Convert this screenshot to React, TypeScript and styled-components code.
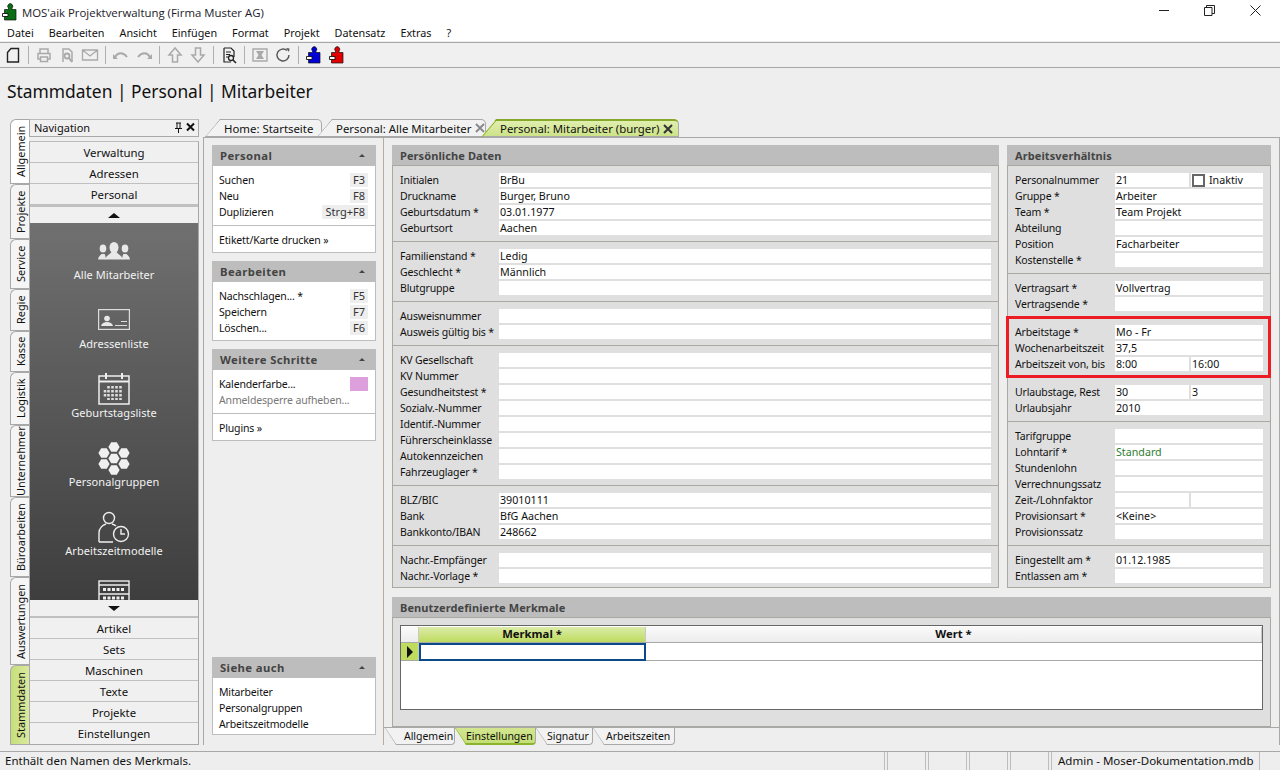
import React from 'react';
import styled, { createGlobalStyle } from 'styled-components';

const Global = createGlobalStyle`
  html, body { margin: 0; padding: 0; width: 1280px; height: 770px; overflow: hidden; background: #eeeeee; }
  * { box-sizing: border-box; }
  #root { width: 1280px; height: 770px; }
`;

const Window = styled.div`
  width: 1280px; height: 770px; display: flex; flex-direction: column; overflow: hidden;
  font-family: "Noto Sans", "Liberation Sans", sans-serif; font-size: 10.5px; letter-spacing: -0.15px; color: #111; background: #eeeeee;
`;
const TitleBar = styled.div`
  height: 24px; background: #fff; display: flex; align-items: center; padding: 0 2px 0 1px; flex: none;
`;
const TitleText = styled.span`
  font-size: 11.4px; letter-spacing: 0; margin-left: 3px; color: #1a1a2a; flex: 1; font-family: "Open Sans", sans-serif;
`;
const WinBtn = styled.div`
  width: 45.5px; height: 20px; display: flex; align-items: center; justify-content: center; margin-top: -4px;
`;
const MenuBar = styled.div`
  height: 17px; background: #fff; display: flex; gap: 15px; padding-left: 7px; align-items: center; flex: none; font-size: 10.8px; letter-spacing: 0;
`;
const Toolbar = styled.div`
  height: 26px; margin-top: 1px; background: #f0f0f0; border-top: 1px solid #a8a8a8; border-bottom: 1px solid #a8a8a8;
  display: flex; align-items: center; padding-left: 3px; gap: 3px; flex: none;
`;
const ToolIcon = styled.div`
  width: 20px; height: 20px; display: flex; align-items: center; justify-content: center;
`;
const ToolSep = styled.div`
  width: 1px; height: 18px; background: #b0b0b0; margin: 0 2px;
`;
const PageTitle = styled.div`
  height: 51px; flex: none; padding: 9px 0 0 7px; font-size: 17.4px; letter-spacing: 0; line-height: 28px; color: #111;
`;
const Main = styled.div`
  flex: 1; min-height: 0; display: flex; padding-left: 10px;
`;
const Rail = styled.div`
  width: 19px; display: flex; flex-direction: column; flex: none; height: 626px;
`;
const RailTab = styled.div<{ $h: number; $green?: boolean; $active?: boolean }>`
  height: ${p => p.$h}px; writing-mode: vertical-rl; transform: rotate(180deg);
  display: flex; align-items: center; justify-content: center; font-size: 10.9px; letter-spacing: 0;
  background: ${p => p.$green ? 'linear-gradient(90deg,#dbe9a0,#c5df78)' : p.$active ? '#fff' : '#f5f5f5'};
  border: 1px solid #a8a8a8; border-left: none; border-radius: 0 0 6px 0; color: #111; white-space: nowrap;
`;
const Nav = styled.div`
  width: 170px; flex: none; display: flex; flex-direction: column; height: 626px;
`;
const NavHead = styled.div`
  height: 18px; background: #f0f0f0; border: 1px solid #a8a8a8; border-top-color: #bbb; padding: 0 0 1px 4px;
  display: flex; align-items: center; margin-bottom: 4px; flex: none; font-size: 11px; letter-spacing: 0;
`;
const NavHeadText = styled.span`
  flex: 1;
`;
const NavStack = styled.div`
  flex: 1; min-height: 0; display: flex; flex-direction: column; border: 1px solid #a8a8a8; border-top-color: #bbb;
`;
const NavBtn = styled.div`
  height: 21px; flex: none; display: flex; align-items: center; justify-content: center; font-size: 11.4px; letter-spacing: 0;
  background: #f0f0f0; border-bottom: 1px solid #c0c0c0; color: #111;
  &:last-child { border-bottom: none; }
`;
const ArrowBtn = styled.div<{ $down?: boolean }>`
  height: 18px; flex: none; display: flex; align-items: center; justify-content: center; background: #f0f0f0;
  border-top: ${p => p.$down ? 'none' : '2px solid #c0c0c0'};
  border-bottom: ${p => p.$down ? '2px solid #c0c0c0' : 'none'};
  &::after {
    content: ''; width: 0; height: 0; border-left: 6px solid transparent; border-right: 6px solid transparent;
    ${p => p.$down ? 'border-top: 5px solid #111;' : 'border-bottom: 5px solid #111;'}
  }
`;
const Dark = styled.div`
  flex: 1; min-height: 0; overflow: hidden; background: linear-gradient(#707070, #3e3e3e);
  display: flex; flex-direction: column; align-items: center;
`;
const DarkItem = styled.div`
  height: 69px; flex: none; width: 100%; display: flex; flex-direction: column; align-items: center;
  color: #f2f2f2; padding-top: 12px; font-size: 11px; letter-spacing: 0.05px;
`;
const DarkIcon = styled.div<{ $inset?: number }>`
  height: 31px; display: flex; align-items: flex-start; justify-content: center; margin-bottom: 1px; padding-top: ${p => p.$inset || 0}px;
`;
const Right = styled.div`
  flex: 1; min-width: 0; margin-left: 4px; display: flex; flex-direction: column; height: 626px;
`;
const TabStrip = styled.div`
  height: 18px; flex: none; display: flex; padding-left: 2px; align-items: flex-end;
`;
const DocTab = styled.div<{ $w: number; $active?: boolean }>`
  width: ${p => p.$w}px; height: 18px; position: relative; display: flex; align-items: center; padding-left: 19px; gap: 4px; flex: none;
  background: ${p => p.$active ? 'linear-gradient(#e0eeb0,#cde388)' : '#f2f2f2'};
  border-top: ${p => p.$active ? '2px solid #86a92a' : '1px solid #a8a8a8'}; border-right: 1px solid #a8a8a8; border-bottom: 1px solid #a8a8a8;
  border-radius: 0 5px 0 0; white-space: nowrap; font-size: 11.4px; letter-spacing: 0;
  clip-path: polygon(15px 0, 100% 0, 100% 100%, 0 100%);
  & + & { margin-left: -5px; }
`;
const TabSlant = styled.svg`
  position: absolute; left: 0; top: -1px; width: 17px; height: 18px; pointer-events: none;
`;
const CloseIcon = styled.svg`
  flex: none; width: 10px; height: 10px;
`;
const Frame = styled.div`
  flex: 1; min-height: 0; border-left: 1px solid #a8a8a8; border-right: 1px solid #a8a8a8; border-top: 1px solid #a8a8a8; display: flex;
`;
const Side = styled.div`
  width: 180px; flex: none; padding: 7px 8px 10px 8px; border-right: 1px solid #b5ae9c;
  display: flex; flex-direction: column; gap: 8px;
`;
const SideSpacer = styled.div`
  flex: 1; margin: -8px 0;
`;
const Card = styled.div`
  width: 164px; border: 1px solid #bdbdbd; background: #fff; flex: none;
`;
const CardHead = styled.div`
  height: 21px; margin: -1px -1px 0; background: #bdbdbd; padding: 0 8px; display: flex; align-items: center; justify-content: space-between;
  font-weight: 700; color: #444; font-size: 11.3px; letter-spacing: 0.4px;
`;
const Caret = styled.span`
  width: 0; height: 0; border-left: 3px solid transparent; border-right: 3px solid transparent; border-bottom: 3px solid #444; margin-right: 3px;
`;
const CardSection = styled.div<{ $tight?: boolean }>`
  padding: 6px 7px ${p => p.$tight ? 2 : 4}px 6px;
  &:not(:last-child) { padding-bottom: 5px; border-bottom: 1px solid #bdbdbd; }
`;
const CardRow = styled.div<{ $muted?: boolean }>`
  height: 16px; display: flex; align-items: center; justify-content: space-between; white-space: nowrap; color: ${p => p.$muted ? '#777' : '#111'};
`;
const Key = styled.span`
  background: #eeeeee; height: 14px; line-height: 14px; padding: 0 3px; color: #333; min-width: 18px; text-align: center; font-size: 11px; letter-spacing: 0;
`;
const Swatch = styled.span`
  width: 18px; height: 14px; background: #dda0dd;
`;
const WorkColumn = styled.div`
  flex: 1; min-width: 0; display: flex; flex-direction: column;
`;
const Work = styled.div`
  flex: 1; min-height: 0; border-bottom: 1px solid #a8a8a8; padding: 7px 8px 0 8px; display: flex; flex-direction: column; gap: 9px;
`;
const PanelRow = styled.div`
  display: flex; gap: 8px; flex: none;
`;
const Panel = styled.div<{ $w?: number }>`
  ${p => p.$w ? `width: ${p.$w}px; flex: none;` : 'flex: 1;'} background: #dfdfdf; border: 1px solid #aaa89f;
`;
const PanelHead = styled.div`
  height: 21px; background: #bdbdbd; padding-left: 8px; display: flex; align-items: center; font-weight: 700; color: #444; font-size: 11px; letter-spacing: 0.1px;
  border-bottom: 1px solid #aaa89f; margin: -1px -1px 0 -1px;
`;
const Group = styled.div<{ $label: number; $last?: boolean }>`
  padding: 6px 7px ${p => p.$last ? 3 : 5}px 7px; display: grid; grid-template-columns: ${p => p.$label}px 1fr; grid-auto-rows: 16px;
  ${p => p.$last ? '' : 'border-bottom: 1px solid #aaa89f;'}
`;
const Label = styled.div`
  height: 15px; display: flex; align-items: center; white-space: nowrap; color: #111;
`;
const Field = styled.div<{ $green?: boolean }>`
  height: 14px; margin-top: 1px; background: #fff; padding-left: 1px; display: flex; align-items: center; font-size: 10.7px; letter-spacing: 0;
  white-space: nowrap; color: ${p => p.$green ? '#2e7d32' : '#111'}; min-width: 0;
`;
const Pair = styled.div`
  display: grid; grid-template-columns: 74px 1fr; gap: 2px;
`;
const CheckField = styled(Field)`
  padding-left: 1px; gap: 4px;
`;
const Check = styled.span`
  width: 13px; height: 13px; border: 2px solid #666; background: #fff; flex: none;
`;
const Highlight = styled.div`
  position: relative;
  &::after {
    content: ''; position: absolute; top: -2px; bottom: 0; left: -2px; right: -1px; border: 3px solid #ed1c24; pointer-events: none;
  }
`;
const GridBox = styled.div`
  margin: 7px 7px 7px; height: 85px; background: #fff; border: 1px solid #666; display: flex; flex-direction: column;
`;
const GridHead = styled.div`
  height: 17px; display: grid; grid-template-columns: 18px 227px 1fr; flex: none; padding-top: 1px; border-bottom: 1px solid #a8a8a8;
`;
const HCell = styled.div<{ $green?: boolean }>`
  background: ${p => p.$green ? 'linear-gradient(#dcebaa,#bfdc5e)' : 'linear-gradient(#fafafa,#ececec)'};
  display: flex; align-items: center; justify-content: center; padding-bottom: 2px; font-weight: 700; font-size: 11.3px; letter-spacing: 0; border-right: 1px solid #c8c8c8; color: #111; height: 15px;
`;
const GridRow = styled.div`
  height: 18px; display: grid; grid-template-columns: 18px 227px 1fr; flex: none; border-bottom: 1px solid #a8a8a8;
`;
const RowMark = styled.div`
  background: #bfdc5e; display: flex; align-items: center; justify-content: center; border-right: 1px solid #c8c8c8;
  &::after { content: ''; width: 0; height: 0; border-top: 6px solid transparent; border-bottom: 6px solid transparent; border-left: 6px solid #111; }
`;
const ActiveCell = styled.div`
  border: 2px solid #0b4a86; background: #fff; margin-bottom: -1px;
`;
const BottomTabs = styled.div`
  height: 17px; display: flex; flex: none; padding-left: 1px;
`;
const SheetTab = styled.div<{ $w: number; $pad: number; $active?: boolean }>`
  width: ${p => p.$w}px; height: 17px; position: relative; display: flex; align-items: center; padding-left: ${p => p.$pad}px; white-space: nowrap; font-size: 10.5px; letter-spacing: -0.03px; flex: none;
  background: ${p => p.$active ? 'linear-gradient(#d3e68f,#c5df78)' : '#f2f2f2'};
  border-right: 1px solid #a8a8a8; border-bottom: ${p => p.$active ? '2px solid #8cb32e' : '1px solid #a8a8a8'}; border-radius: 0 0 4px 0;
  clip-path: polygon(0 0, 100% 0, 100% 100%, 11px 100%);
`;
const SheetSlant = styled.svg`
  position: absolute; left: 0; top: 0; width: 12px; height: 17px; pointer-events: none;
`;
const Status = styled.div`
  height: 19px; flex: none; margin-top: 6px; border-top: 1px solid #a8a8a8; display: flex; padding-right: 20px;
`;
const StatusText = styled.div`
  flex: 1; padding-left: 5px; line-height: 17px; font-size: 11.5px; letter-spacing: 0; border-right: 1px solid #bdbdbd; margin-right: 2px;
`;
const StatusPane = styled.div<{ $w: number }>`
  width: ${p => p.$w}px; border-left: 1px solid #bdbdbd; border-right: 1px solid #bdbdbd; margin-right: 2px; line-height: 17px; padding-left: 6px; font-size: 11.5px; letter-spacing: 0;
  &:last-child { margin-right: 0; }
`;

const Puzzle = ({ c, s = 18 }: { c: string; s?: number }) => (
  <svg width={s} height={s} viewBox="0 0 18 18">
    <path d="M3.500 6.500h4V5a2.500 2.500 0 1 1 3.500 0v1.500h4V17h-11.500z" fill={c} stroke="#111" strokeWidth=".7" />
    <path d="M1.500 10.500h5.500v3H1.500z" fill="#fff" stroke="#111" strokeWidth=".9" />
  </svg>
);
const G = '#a9a9a9';
const Ic = ({ children }: { children: React.ReactNode }) => (
  <ToolIcon><svg width="18" height="18" viewBox="0 0 18 18" fill="none">{children}</svg></ToolIcon>
);
const Slant = ({ c = '#a8a8a8' }: { c?: string }) => (
  <TabSlant viewBox="0 0 17 18"><path d="M0 18L15.500 0" stroke={c} fill="none" /></TabSlant>
);
const SSlant = ({ c = '#a8a8a8' }: { c?: string }) => (
  <SheetSlant viewBox="0 0 12 17"><path d="M0 0L11 16.500" stroke={c} fill="none" /></SheetSlant>
);

const labelsL: [string, string, boolean?][][] = [
  [['Initialen', 'BrBu'], ['Druckname', 'Burger, Bruno'], ['Geburtsdatum *', '03.01.1977'], ['Geburtsort', 'Aachen']],
  [['Familienstand *', 'Ledig'], ['Geschlecht *', 'Männlich'], ['Blutgruppe', '']],
  [['Ausweisnummer', ''], ['Ausweis gültig bis *', '']],
  [['KV Gesellschaft', ''], ['KV Nummer', ''], ['Gesundheitstest *', ''], ['Sozialv.-Nummer', ''], ['Identif.-Nummer', ''], ['Führerscheinklasse', ''], ['Autokennzeichen', ''], ['Fahrzeuglager *', '']],
  [['BLZ/BIC', '39010111'], ['Bank', 'BfG Aachen'], ['Bankkonto/IBAN', '248662']],
  [['Nachr.-Empfänger', ''], ['Nachr.-Vorlage *', '']],
];

const Rows = ({ rows }: { rows: [string, string, boolean?][] }) => (
  <>
    {rows.map(([l, v, g]) => (
      <React.Fragment key={l}>
        <Label>{l}</Label>
        <Field $green={g}>{v}</Field>
      </React.Fragment>
    ))}
  </>
);

const railTabs: [string, number, boolean?, boolean?][] = [
  ['Allgemein', 65, false, true], ['Projekte', 55], ['Service', 50], ['Regie', 42], ['Kasse', 41], ['Logistik', 53],
  ['Unternehmer', 72], ['Büroarbeiten', 80], ['Auswertungen', 88], ['Stammdaten', 80, true],
];

export default function App() {
  return (
    <Window>
      <Global />
      <TitleBar>
        <Puzzle c="#0a6e14" s={18} />
        <TitleText>MOS'aik Projektverwaltung (Firma Muster AG)</TitleText>
        <WinBtn><svg width="11" height="11" viewBox="0 0 11 11"><path d="M0 5.500h10" stroke="#222" /></svg></WinBtn>
        <WinBtn><svg width="11" height="11" viewBox="0 0 11 11" fill="none" stroke="#222"><path d="M.5 2.500h7.500v8h-7.500zM2.500 2.500v-2h8v8h-2.500" /></svg></WinBtn>
        <WinBtn><svg width="11" height="11" viewBox="0 0 11 11"><path d="M.5.5l10 10M10.500.5l-10 10" stroke="#222" /></svg></WinBtn>
      </TitleBar>
      <MenuBar>
        {['Datei', 'Bearbeiten', 'Ansicht', 'Einfügen', 'Format', 'Projekt', 'Datensatz', 'Extras', '?'].map(m => <span key={m}>{m}</span>)}
      </MenuBar>
      <Toolbar>
        <Ic><path d="M3.500 6.500l3.500-4h7.500v13.500h-11z" stroke="#222" strokeWidth="1.400" /></Ic>
        <ToolSep />
        <Ic><path d="M5 7V3h8v4M5 13H3V7.500h12V13h-2M5.500 11h7v4.500h-7z" stroke={G} strokeWidth="1.500" /></Ic>
        <Ic><path d="M5 16V3h6l3 3v10" stroke={G} strokeWidth="1.500" /><circle cx="9" cy="10" r="2.500" stroke={G} strokeWidth="1.800" /><path d="M11 12l3 4" stroke={G} strokeWidth="2" /></Ic>
        <Ic><path d="M1.500 4h15v10h-15zM1.500 4L9 10l7.500-6" stroke={G} strokeWidth="1.300" /></Ic>
        <ToolSep />
        <Ic><path d="M3 11c3-5 8-5 12 0" stroke={G} strokeWidth="2" /><path d="M1 8v5h5z" fill={G} /></Ic>
        <Ic><path d="M15 11c-3-5-8-5-12 0" stroke={G} strokeWidth="2" /><path d="M17 8v5h-5z" fill={G} /></Ic>
        <ToolSep />
        <Ic><path d="M9 2L3 9h3.500v7h5V9H15z" stroke={G} strokeWidth="1.500" /></Ic>
        <Ic><path d="M9 16L3 9h3.500V2h5v7H15z" stroke={G} strokeWidth="1.500" /></Ic>
        <ToolSep />
        <Ic><path d="M4 2h7l3 3v6M4 2v14h7" stroke="#222" strokeWidth="1.200" /><path d="M6 6h5M6 8.500h4M6 11h2" stroke="#222" /><circle cx="11" cy="12" r="2.500" stroke="#222" strokeWidth="1.300" /><path d="M13 14l3 3" stroke="#222" strokeWidth="1.600" /></Ic>
        <ToolSep />
        <Ic><path d="M2 3h14v12H2z" stroke={G} strokeWidth="1.400" /><path d="M5 5h8l-2.500 4L13 13H5l2.500-4z" fill={G} /></Ic>
        <Ic><path d="M15 9a6 6 0 1 1-2-4.500" stroke="#555" strokeWidth="1.400" /><path d="M12 2l3.500.5L15 6z" fill="#555" /></Ic>
        <ToolSep />
        <ToolIcon><Puzzle c="#0000d8" /></ToolIcon>
        <ToolIcon><Puzzle c="#e00000" /></ToolIcon>
      </Toolbar>
      <PageTitle>Stammdaten | Personal | Mitarbeiter</PageTitle>
      <Main>
        <Rail>
          {railTabs.map(([t, h, g, a]) => <RailTab key={t} $h={h} $green={g} $active={a}>{t}</RailTab>)}
        </Rail>
        <Nav>
          <NavHead>
            <NavHeadText>Navigation</NavHeadText>
            <svg width="11" height="11" viewBox="0 0 11 11"><path d="M3 1h5M4 1v5M7 1v5M2 6.500h7M5.500 6.500V11" stroke="#111" fill="none" /></svg>
            <svg width="14" height="11" viewBox="0 0 14 11"><path d="M3 1.500l7 7M10 1.500l-7 7" stroke="#111" strokeWidth="2" /></svg>
          </NavHead>
          <NavStack>
            <NavBtn>Verwaltung</NavBtn>
            <NavBtn>Adressen</NavBtn>
            <NavBtn>Personal</NavBtn>
            <ArrowBtn />
            <Dark>
              <DarkItem>
                <DarkIcon $inset={7}>
                  <svg width="32" height="18" viewBox="0 0 32 18" fill="#e8e8e8">
                    <ellipse cx="5" cy="6.500" rx="3.300" ry="4" /><ellipse cx="27" cy="6.500" rx="3.300" ry="4" />
                    <path d="M0 17.500c.5-3 2-4 3.500-5.500h3c.8 1 1 2 1.500 5.500z" /><path d="M32 17.500c-.5-3-2-4-3.500-5.500h-3c-.8 1-1 2-1.500 5.500z" />
                    <ellipse cx="16" cy="5.500" rx="4.500" ry="5.500" /><path d="M7 17.500c1-4 5-5 6.500-7.500h5c1.500 2.500 5.500 3.500 6.500 7.500z" />
                  </svg>
                </DarkIcon>
                <span>Alle Mitarbeiter</span>
              </DarkItem>
              <DarkItem>
                <DarkIcon $inset={5}>
                  <svg width="32" height="21" viewBox="0 0 32 21" fill="none">
                    <rect x=".6" y=".6" width="30.800" height="19.800" stroke="#ddd" strokeWidth="1.200" />
                    <circle cx="9" cy="9.500" r="2.800" fill="#e8e8e8" /><path d="M3 17c1-3 3-4 6-4s5 1 6 4z" fill="#e8e8e8" />
                    <path d="M17 16.500h12" stroke="#ddd" /><path d="M23 12.500h6" stroke="#ddd" />
                  </svg>
                </DarkIcon>
                <span>Adressenliste</span>
              </DarkItem>
              <DarkItem>
                <DarkIcon>
                  <svg width="32" height="32" viewBox="0 0 32 32" fill="none">
                    <rect x="1" y="3" width="30" height="28" stroke="#eee" strokeWidth="1.500" /><path d="M1 8.500h30" stroke="#eee" strokeWidth="2" />
                    <path d="M8 0v6M24 0v6" stroke="#eee" strokeWidth="2" />
                    <path d="M10.500 13v14M14.500 13v14M18.500 13v14M22.500 13v14M7 17v8" stroke="#ddd" strokeWidth="2.600" strokeDasharray="2.600 1.400" />
                  </svg>
                </DarkIcon>
                <span>Geburtstagsliste</span>
              </DarkItem>
              <DarkItem>
                <DarkIcon>
                  <svg width="32" height="33" viewBox="0 0 32 33" fill="#f0f0f0">
                    {[[16, 5], [6, 11], [26, 11], [16, 16.500], [6, 22], [26, 22], [16, 28]].map(([x, y]) => (
                      <path key={`${x}-${y}`} d={`M${x - 2.800} ${y - 4.800}h5.600l2.800 4.800-2.800 4.800h-5.600L${x - 5.600} ${y}z`} />
                    ))}
                  </svg>
                </DarkIcon>
                <span>Personalgruppen</span>
              </DarkItem>
              <DarkItem>
                <DarkIcon>
                  <svg width="32" height="32" viewBox="0 0 32 32" fill="none" stroke="#eee" strokeWidth="1.400">
                    <circle cx="11" cy="7" r="5.500" /><path d="M1 31V22c0-5 4-8 7-9M14 13c2 .5 3 1 4 2M1 31h14" />
                    <circle cx="23" cy="23" r="7.500" /><path d="M23 18v5h4" />
                  </svg>
                </DarkIcon>
                <span>Arbeitszeitmodelle</span>
              </DarkItem>
              <DarkItem>
                <DarkIcon>
                  <svg width="32" height="32" viewBox="0 0 32 32" fill="none" stroke="#eee" strokeWidth="1.400">
                    <rect x="1" y="1" width="30" height="30" /><path d="M1 5h30M1 14h30" />
                    <path d="M5 9.500h22M5 18h22" strokeWidth="3" strokeDasharray="3 1.500" />
                  </svg>
                </DarkIcon>
              </DarkItem>
            </Dark>
            <ArrowBtn $down />
            <NavBtn>Artikel</NavBtn>
            <NavBtn>Sets</NavBtn>
            <NavBtn>Maschinen</NavBtn>
            <NavBtn>Texte</NavBtn>
            <NavBtn>Projekte</NavBtn>
            <NavBtn>Einstellungen</NavBtn>
          </NavStack>
        </Nav>
        <Right>
          <TabStrip>
            <DocTab $w={117}><Slant />Home: Startseite</DocTab>
            <DocTab $w={169}><Slant />Personal: Alle Mitarbeiter
              <CloseIcon viewBox="0 0 10 10"><path d="M1 1l8 8M9 1L1 9" stroke="#8a8a8a" strokeWidth="2" /></CloseIcon>
            </DocTab>
            <DocTab $w={198} $active><Slant c="#86a92a" />Personal: Mitarbeiter (burger)
              <CloseIcon viewBox="0 0 10 10"><path d="M1 1l8 8M9 1L1 9" stroke="#333" strokeWidth="2" /></CloseIcon>
            </DocTab>
          </TabStrip>
          <Frame>
            <Side>
              <Card>
                <CardHead>Personal<Caret /></CardHead>
                <CardSection>
                  <CardRow>Suchen<Key>F3</Key></CardRow>
                  <CardRow>Neu<Key>F8</Key></CardRow>
                  <CardRow>Duplizieren<Key>Strg+F8</Key></CardRow>
                </CardSection>
                <CardSection><CardRow>Etikett/Karte drucken »</CardRow></CardSection>
              </Card>
              <Card>
                <CardHead>Bearbeiten<Caret /></CardHead>
                <CardSection>
                  <CardRow>Nachschlagen... *<Key>F5</Key></CardRow>
                  <CardRow>Speichern<Key>F7</Key></CardRow>
                  <CardRow>Löschen...<Key>F6</Key></CardRow>
                </CardSection>
              </Card>
              <Card>
                <CardHead>Weitere Schritte<Caret /></CardHead>
                <CardSection>
                  <CardRow>Kalenderfarbe...<Swatch /></CardRow>
                  <CardRow $muted>Anmeldesperre aufheben...</CardRow>
                </CardSection>
                <CardSection><CardRow>Plugins »</CardRow></CardSection>
              </Card>
              <SideSpacer />
              <Card>
                <CardHead>Siehe auch<Caret /></CardHead>
                <CardSection $tight>
                  <CardRow>Mitarbeiter</CardRow>
                  <CardRow>Personalgruppen</CardRow>
                  <CardRow>Arbeitszeitmodelle</CardRow>
                </CardSection>
              </Card>
            </Side>
            <WorkColumn>
              <Work>
                <PanelRow>
                  <Panel>
                    <PanelHead>Persönliche Daten</PanelHead>
                    {labelsL.map((g, i) => <Group key={i} $label={99} $last={i === labelsL.length - 1}><Rows rows={g} /></Group>)}
                  </Panel>
                  <Panel $w={264}>
                    <PanelHead>Arbeitsverhältnis</PanelHead>
                    <Group $label={100}>
                      <Label>Personalnummer</Label>
                      <Pair><Field>21</Field><CheckField><Check />Inaktiv</CheckField></Pair>
                      <Rows rows={[['Gruppe *', 'Arbeiter'], ['Team *', 'Team Projekt'], ['Abteilung', ''], ['Position', 'Facharbeiter'], ['Kostenstelle *', '']]} />
                    </Group>
                    <Group $label={100}>
                      <Rows rows={[['Vertragsart *', 'Vollvertrag'], ['Vertragsende *', '']]} />
                    </Group>
                    <Highlight>
                      <Group $label={100}>
                        <Rows rows={[['Arbeitstage *', 'Mo - Fr'], ['Wochenarbeitszeit', '37,5']]} />
                        <Label>Arbeitszeit von, bis</Label>
                        <Pair><Field>8:00</Field><Field>16:00</Field></Pair>
                      </Group>
                    </Highlight>
                    <Group $label={100}>
                      <Label>Urlaubstage, Rest</Label>
                      <Pair><Field>30</Field><Field>3</Field></Pair>
                      <Rows rows={[['Urlaubsjahr', '2010']]} />
                    </Group>
                    <Group $label={100}>
                      <Rows rows={[['Tarifgruppe', ''], ['Lohntarif *', 'Standard', true], ['Stundenlohn', ''], ['Verrechnungssatz', '']]} />
                      <Label>Zeit-/Lohnfaktor</Label>
                      <Pair><Field /><Field /></Pair>
                      <Rows rows={[['Provisionsart *', '<Keine>'], ['Provisionssatz', '']]} />
                    </Group>
                    <Group $label={100} $last>
                      <Rows rows={[['Eingestellt am *', '01.12.1985'], ['Entlassen am *', '']]} />
                    </Group>
                  </Panel>
                </PanelRow>
                <Panel>
                  <PanelHead>Benutzerdefinierte Merkmale</PanelHead>
                  <GridBox>
                    <GridHead>
                      <HCell /><HCell $green>Merkmal *</HCell><HCell>Wert *</HCell>
                    </GridHead>
                    <GridRow>
                      <RowMark /><ActiveCell /><div />
                    </GridRow>
                  </GridBox>
                </Panel>
              </Work>
              <BottomTabs>
                <SheetTab $w={70} $pad={19}><SSlant />Allgemein</SheetTab>
                <SheetTab $w={81} $pad={11} $active><SSlant c="#8cb32e" />Einstellungen</SheetTab>
                <SheetTab $w={57} $pad={11}><SSlant />Signatur</SheetTab>
                <SheetTab $w={82} $pad={13}><SSlant />Arbeitszeiten</SheetTab>
              </BottomTabs>
            </WorkColumn>
          </Frame>
        </Right>
      </Main>
      <Status>
        <StatusText>Enthält den Namen des Merkmals.</StatusText>
        <StatusPane $w={39} /><StatusPane $w={39} /><StatusPane $w={39} /><StatusPane $w={39} />
        <StatusPane $w={209}>Admin - Moser-Dokumentation.mdb</StatusPane>
      </Status>
    </Window>
  );
}
